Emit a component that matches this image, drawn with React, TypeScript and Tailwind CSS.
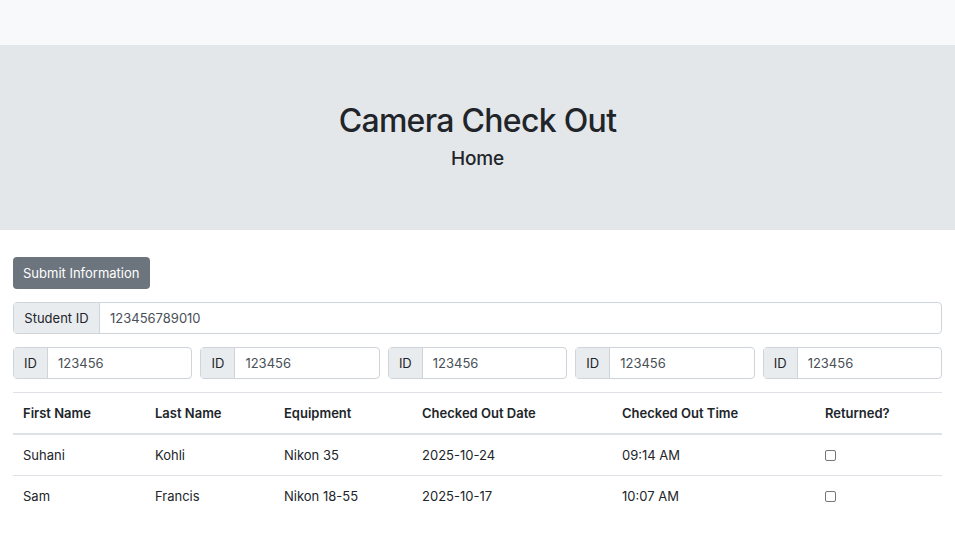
import React from 'react';

const rows = [
  { first: 'Suhani', last: 'Kohli', equipment: 'Nikon 35', date: '2025-10-24', time: '09:14 AM' },
  { first: 'Sam', last: 'Francis', equipment: 'Nikon 18-55', date: '2025-10-17', time: '10:07 AM' },
];

const IdGroup = ({ label, value, labelWidth }: { label: string; value: string; labelWidth: string }) => (
  <div className="flex h-8 flex-1 rounded border border-[#ced4da] pt-[1px] text-[13px]">
    <span className={`-mt-[1px] flex items-center justify-center border-r border-[#ced4da] bg-[#e9ecef] pt-[1px] text-[#212529] ${labelWidth}`}>
      {label}
    </span>
    <span className="flex items-center px-[10px] text-[#495057]">{value}</span>
  </div>
);

export default function App() {
  return (
    <div className="min-h-screen bg-white text-[#212529] font-['Inter',sans-serif]">
      <nav className="h-[45px] bg-[#f8f9fa]" />
      <header className="flex h-[185px] flex-col items-center justify-center bg-[#e4e7ea] pb-[4px]">
        <h1 className="text-[32px] leading-[42px] font-medium tracking-[-0.7px]">Camera Check Out</h1>
        <p className="mt-[5px] text-[19px] leading-[24px] font-medium tracking-[-0.2px]">Home</p>
      </header>

      <main className="px-[13px] pt-[27px]">
        <button className="h-8 rounded bg-[#6c757d] px-[10px] pt-[1px] text-[13px] text-white">Submit Information</button>

        <div className="mt-[13px]">
          <IdGroup label="Student ID" value="123456789010" labelWidth="w-[86px]" />
        </div>

        <div className="mt-[13px] flex gap-2">
          {[0, 1, 2, 3, 4].map((i) => (
            <IdGroup key={i} label="ID" value="123456" labelWidth="w-[34px]" />
          ))}
        </div>

        <table className="mt-[13px] w-full border-collapse text-[13px]">
          <thead>
            <tr className="border-t border-[#dee2e6] border-b-2 border-b-[#dee2e6]">
              <th className="w-[132px] px-[10px] pt-[11px] pb-[9px] text-left font-semibold">First Name</th>
              <th className="w-[129px] px-[10px] pt-[11px] pb-[9px] text-left font-semibold">Last Name</th>
              <th className="w-[138px] px-[10px] pt-[11px] pb-[9px] text-left font-semibold">Equipment</th>
              <th className="w-[200px] px-[10px] pt-[11px] pb-[9px] text-left font-semibold">Checked Out Date</th>
              <th className="w-[203px] px-[10px] pt-[11px] pb-[9px] text-left font-semibold">Checked Out Time</th>
              <th className="px-[10px] pt-[11px] pb-[9px] text-left font-semibold">Returned?</th>
            </tr>
          </thead>
          <tbody>
            {rows.map((r, i) => (
              <tr key={r.first} className={i === 0 ? 'border-b border-[#dee2e6]' : ''}>
                <td className="px-[10px] pt-[11px] pb-[10px]">{r.first}</td>
                <td className="px-[10px] pt-[11px] pb-[10px]">{r.last}</td>
                <td className="px-[10px] pt-[11px] pb-[10px]">{r.equipment}</td>
                <td className="px-[10px] pt-[11px] pb-[10px]">{r.date}</td>
                <td className="px-[10px] pt-[11px] pb-[10px]">{r.time}</td>
                <td className="px-[10px] pt-[11px] pb-[10px]">
                  <span className="block h-[11px] w-[11px] rounded-[2px] border border-[#767676] bg-white" />
                </td>
              </tr>
            ))}
          </tbody>
        </table>
      </main>
    </div>
  );
}
